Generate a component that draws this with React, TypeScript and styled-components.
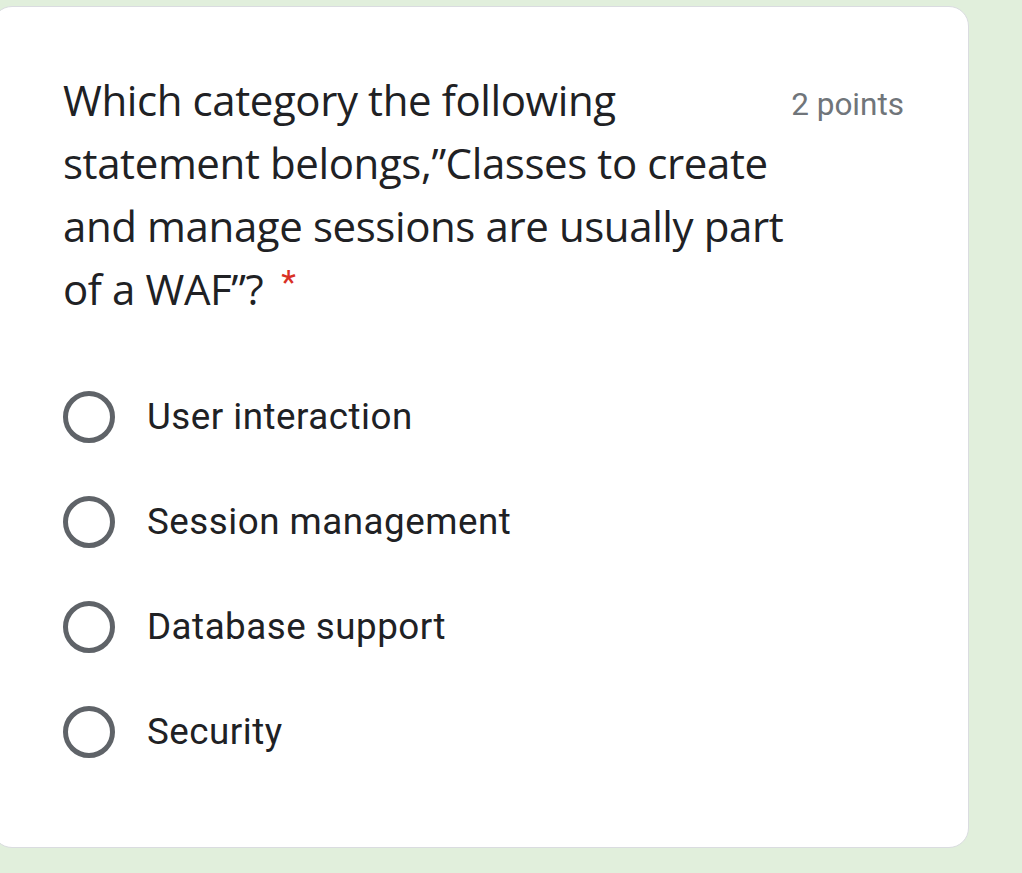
import React from "react";
import styled, { createGlobalStyle } from "styled-components";

const Global = createGlobalStyle`
  html, body {
    margin: 0;
    padding: 0;
    background: #e1efdc;
  }
  body {
    font-family: Roboto, "Liberation Sans", sans-serif;
    overflow: hidden;
  }
`;

const Page = styled.div`
  width: 1022px;
  height: 873px;
  padding-top: 6px;
  box-sizing: border-box;
`;

const Card = styled.div`
  margin-left: -8px;
  width: 977px;
  height: 842px;
  box-sizing: border-box;
  background: #ffffff;
  border: 1px solid #dadce0;
  border-radius: 20px;
  padding: 61px 64px 0 70px;
`;

const Header = styled.div`
  display: flex;
  align-items: flex-start;
`;

const Title = styled.div`
  width: 730px;
  font-family: "Open Sans", "Noto Sans", sans-serif;
  font-size: 42px;
  line-height: 63px;
  letter-spacing: -0.4px;
  color: #202124;
`;

const Required = styled.span`
  color: #d93025;
  padding-left: 18px;
  font-family: Roboto, sans-serif;
  font-size: 34px;
  line-height: 1;
  vertical-align: 11px;
`;

const Points = styled.div`
  margin-left: auto;
  padding-top: 17px;
  font-family: Roboto, sans-serif;
  font-size: 31.5px;
  line-height: 40px;
  color: #70757a;
  white-space: nowrap;
`;

const Options = styled.div`
  display: flex;
  flex-direction: column;
  margin-top: 44px;
`;

const Option = styled.label`
  display: flex;
  align-items: center;
  height: 105px;
`;

const Radio = styled.span`
  width: 52px;
  height: 52px;
  box-sizing: border-box;
  border: 5px solid #5f6368;
  border-radius: 50%;
  flex: none;
`;

const OptionText = styled.span`
  margin-left: 32px;
  font-family: Roboto, sans-serif;
  font-size: 36.75px;
  letter-spacing: 0.5px;
  color: #202124;
`;

const options = [
  "User interaction",
  "Session management",
  "Database support",
  "Security",
];

export default function App() {
  return (
    <Page>
      <Global />
      <Card>
        <Header>
          <Title>
            Which category the following statement belongs,”Classes to create
            and manage sessions are usually part of a WAF”?
            <Required>*</Required>
          </Title>
          <Points>2 points</Points>
        </Header>
        <Options>
          {options.map((o) => (
            <Option key={o}>
              <Radio />
              <OptionText>{o}</OptionText>
            </Option>
          ))}
        </Options>
      </Card>
    </Page>
  );
}
